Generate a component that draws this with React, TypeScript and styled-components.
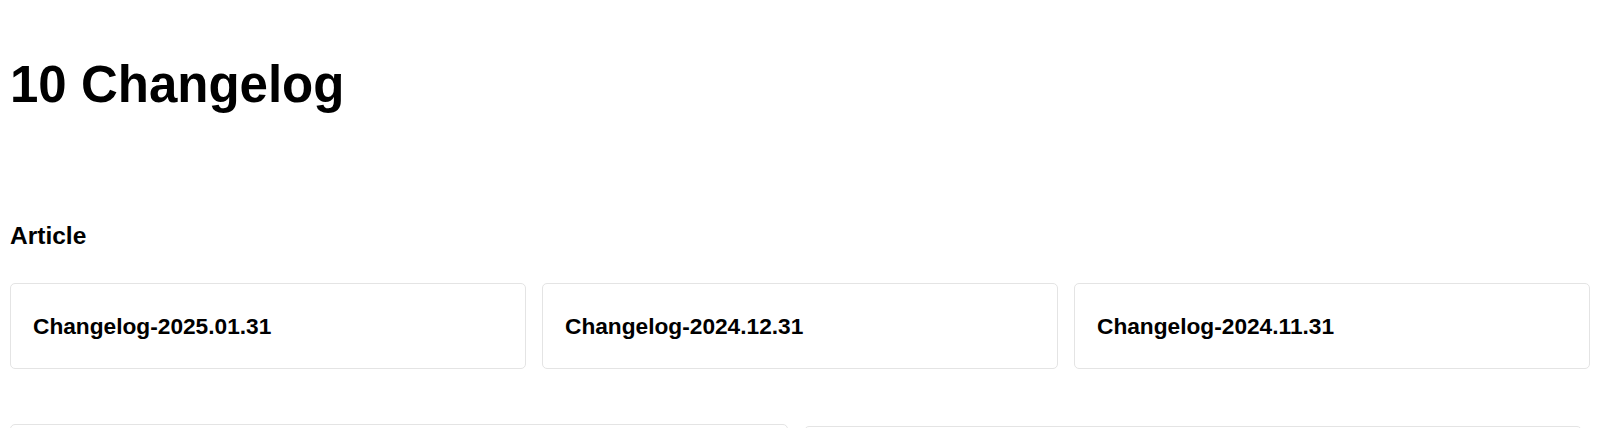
import React from "react";
import styled, { createGlobalStyle } from "styled-components";

const GlobalStyle = createGlobalStyle`
  html, body {
    margin: 0;
    padding: 0;
    background: #ffffff;
    font-family: "Liberation Sans", Arial, sans-serif;
    color: #000;
  }
  * { box-sizing: border-box; }
`;

const Page = styled.div`
  padding: 55px 10px 0 10px;
  overflow: hidden;
  height: 428px;
`;

const Title = styled.h1`
  margin: 0;
  font-size: 51px;
  font-weight: 700;
  line-height: 60px;
`;

const SectionTitle = styled.h2`
  margin: 107px 0 0 0;
  font-size: 24.5px;
  font-weight: 700;
  line-height: 27px;
`;

const Grid = styled.div<{ $cols: number; $mt: number; $pr?: number }>`
  display: grid;
  grid-template-columns: repeat(${(p) => p.$cols}, 1fr);
  gap: 16px;
  margin-top: ${(p) => p.$mt}px;
  padding-right: ${(p) => p.$pr ?? 0}px;
  align-items: start;
`;

const Card = styled.a<{ $offset?: number }>`
  display: flex;
  align-items: center;
  height: 86px;
  padding: 0 22px;
  margin-top: ${(p) => p.$offset ?? 0}px;
  border: 1px solid #e4e4e4;
  border-radius: 5px;
  background: #fff;
  color: #000;
  text-decoration: none;
  font-size: 22.7px;
  font-weight: 700;
`;

const articles = [
  "Changelog-2025.01.31",
  "Changelog-2024.12.31",
  "Changelog-2024.11.31",
];

export default function App() {
  return (
    <>
      <GlobalStyle />
      <Page>
        <Title>10 Changelog</Title>
        <SectionTitle>Article</SectionTitle>
        <Grid $cols={3} $mt={34}>
          {articles.map((a) => (
            <Card key={a} href="#">
              {a}
            </Card>
          ))}
        </Grid>
        <Grid $cols={2} $mt={55} $pr={8}>
          <Card href="#" />
          <Card href="#" $offset={2} />
        </Grid>
      </Page>
    </>
  );
}
